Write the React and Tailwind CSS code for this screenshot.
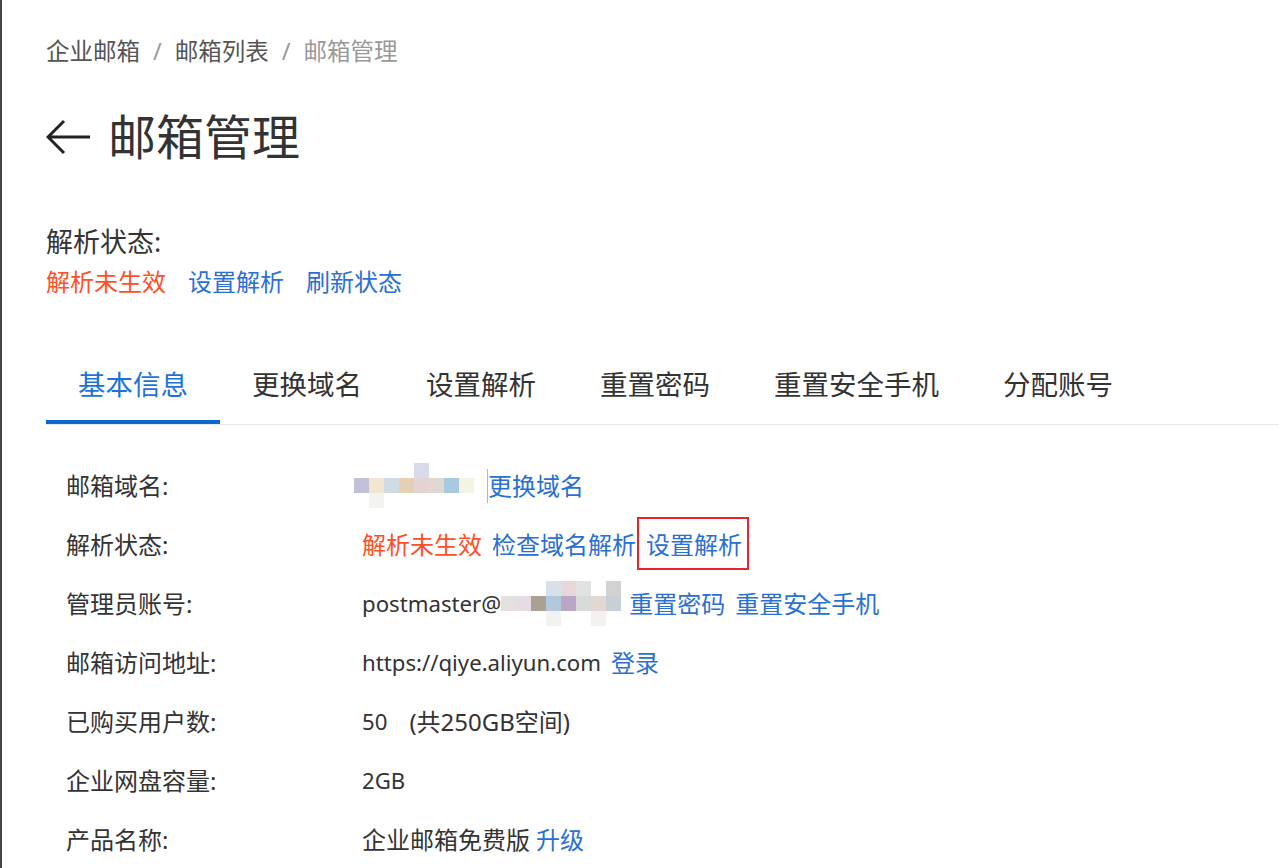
import React from "react";

const font = "font-['Noto_Sans','Noto_Sans_CJK_SC',sans-serif]";

function Mosaic({ top = [], main = [], bottom = [], className = "" }) {
  // small pixelated placeholder used where the screenshot had blurred text
  const row = (cells) => (
    <div className="flex h-[15px]">
      {cells.map((c, i) => (
        <span key={i} className="w-[15px] h-full" style={{ backgroundColor: c || "transparent" }} />
      ))}
    </div>
  );
  return (
    <span className={`inline-flex flex-col justify-center self-center ${className}`}>
      {row(top)}
      {row(main)}
      {row(bottom)}
    </span>
  );
}

const tabs = ["基本信息", "更换域名", "设置解析", "重置密码", "重置安全手机", "分配账号"];

function Row({ label, children }) {
  return (
    <div className="flex items-center h-[59px]">
      <div className="w-[316px] pl-[20px] text-[#333]">{label}</div>
      <div className="flex items-center text-[#333]">{children}</div>
    </div>
  );
}

export default function App() {
  return (
    <div className={`${font} min-h-[868px] bg-white border-l-2 border-[#444] pl-[44px] pt-[36px] text-[24px] leading-[30px]`}>
      <nav className="flex items-center text-[#555] h-[30px] text-[23.5px]">
        <span>企业邮箱</span>
        <span className="mx-[13px] text-[#999]">/</span>
        <span>邮箱列表</span>
        <span className="mx-[13px] text-[#999]">/</span>
        <span className="text-[#999]">邮箱管理</span>
      </nav>

      <div className="flex items-center mt-[41px] h-[60px]">
        <svg width="46" height="36" viewBox="0 0 46 36" className="shrink-0">
          <path d="M2 18 H44 M18 2 L2 18 L18 34" fill="none" stroke="#222" strokeWidth="3" />
        </svg>
        <h1 className="ml-[16px] text-[48px] leading-[60px] text-[#333]">邮箱管理</h1>
      </div>

      <div className="mt-[58px] h-[34px] leading-[34px] text-[#333] text-[27px]">解析状态:</div>
      <div className="mt-[6px] h-[34px] leading-[34px] flex gap-[22px]">
        <span className="text-[#ff4f26]">解析未生效</span>
        <span className="text-[#2a6fd4]">设置解析</span>
        <span className="text-[#2a6fd4]">刷新状态</span>
      </div>

      <div className="mt-[66px] flex border-b border-[#e8e8e8] text-[27.5px]">
        {tabs.map((t, i) => (
          <div
            key={t}
            className={
              i === 0
                ? "px-[32px] h-[59px] leading-[40px] border-b-4 border-[#0b68cf] text-[#1c72d8] -mb-px"
                : "px-[32px] h-[59px] leading-[40px] text-[#333]"
            }
          >
            {t}
          </div>
        ))}
      </div>

      <div className="mt-[31px] leading-[34px]">
        <Row label="邮箱域名:">
          <Mosaic
            className="-ml-[8px]"
            top={[null, null, null, null, "#d8dcea"]}
            main={["#c2bfd9", "#f2e6d2", "#d1dbe4", "#e6cfb5", "#e3d3d2", "#e0d8d3", "#a9c8e2", "#f3f4e6"]}
            bottom={[null, "#f5f3f0"]}
          />
          <span className="ml-[13px] border-l border-[#9bbbe5] text-[#2a6fd4]">更换域名</span>
        </Row>
        <Row label="解析状态:">
          <span className="text-[#ff4f26]">解析未生效</span>
          <span className="ml-[10px] text-[#2a6fd4]">检查域名解析</span>
          <span className="ml-[10px] relative text-[#2a6fd4]">
            设置解析
            <span className="absolute -left-[9px] -right-[7px] -top-[11px] -bottom-[8px] border-2 border-[#e3262d]" />
          </span>
        </Row>
        <Row label="管理员账号:">
          <span className="text-[22.2px]">postmaster@</span>
          <Mosaic
            top={[null, null, null, "#d8e1ea", "#e6d8d8", "#e1e1e1", null, "#d2d2d2"]}
            main={["#e2e1df", "#e6dce4", "#aaa096", "#b2c8dc", "#baa5c4", "#d9dbdb", "#e1d8d4", "#c8cfd6"]}
            bottom={[null, null, null, "#f2f2f2", null, null, "#f4f1f0"]}
          />
          <span className="ml-[8px] text-[#2a6fd4]">重置密码</span>
          <span className="ml-[10px] text-[#2a6fd4]">重置安全手机</span>
        </Row>
        <Row label="邮箱访问地址:">
          <span className="text-[22.2px]">https://qiye.aliyun.com</span>
          <span className="ml-[10px] text-[#2a6fd4]">登录</span>
        </Row>
        <Row label="已购买用户数:">
          <span className="text-[22.2px]">50</span>
          <span className="ml-[22px]">(共250GB空间)</span>
        </Row>
        <Row label="企业网盘容量:">
          <span className="text-[22.2px]">2GB</span>
        </Row>
        <Row label="产品名称:">
          <span>企业邮箱免费版</span>
          <span className="ml-[6px] text-[#2a6fd4]">升级</span>
        </Row>
      </div>
    </div>
  );
}
